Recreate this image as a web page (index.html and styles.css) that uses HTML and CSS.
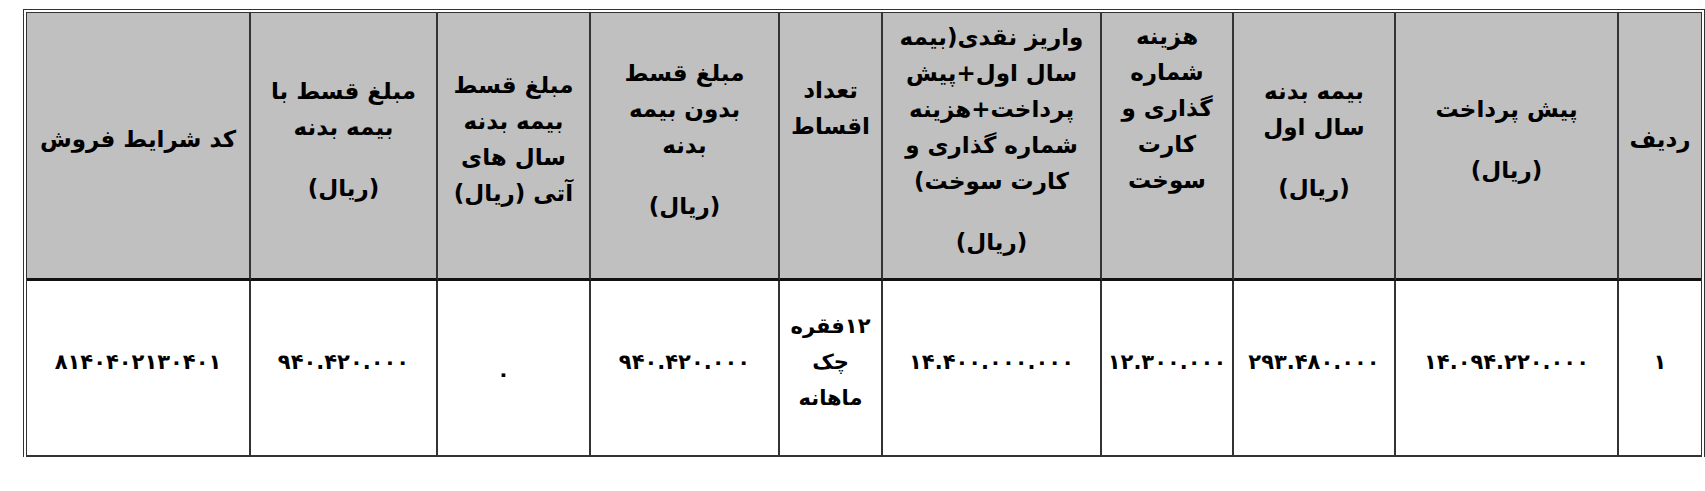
FILE: index.html
```html
<!DOCTYPE html>
<html lang="fa" dir="rtl">
<head>
<meta charset="utf-8">
<title>شرایط فروش</title>
<link rel="stylesheet" href="styles.css">
</head>
<body>
<div class="frame">
  <div class="grid">
    <div class="hd"><div class="ln">ردیف</div></div>
    <div class="hd"><div class="ln">پیش پرداخت</div><div class="ln unit">(ریال)</div></div>
    <div class="hd"><div class="ln">بیمه بدنه<br>سال اول</div><div class="ln unit">(ریال)</div></div>
    <div class="hd hd-high"><div class="ln">هزینه<br>شماره<br>گذاری و<br>کارت<br>سوخت</div></div>
    <div class="hd"><div class="ln">واریز نقدی(بیمه<br>سال اول+پیش<br>پرداخت+هزینه<br>شماره گذاری و<br>کارت سوخت)</div><div class="ln unit">(ریال)</div></div>
    <div class="hd hd-high"><div class="ln">تعداد<br>اقساط</div></div>
    <div class="hd"><div class="ln">مبلغ قسط<br>بدون بیمه<br>بدنه</div><div class="ln unit">(ریال)</div></div>
    <div class="hd"><div class="ln">مبلغ قسط<br>بیمه بدنه<br>سال های<br>آتی (ریال)</div></div>
    <div class="hd"><div class="ln">مبلغ قسط با<br>بیمه بدنه</div><div class="ln unit">(ریال)</div></div>
    <div class="hd"><div class="ln">کد شرایط فروش</div></div>

    <div class="bd">۱</div>
    <div class="bd">۱۴.۰۹۴.۲۲۰.۰۰۰</div>
    <div class="bd">۲۹۳.۴۸۰.۰۰۰</div>
    <div class="bd">۱۲.۳۰۰.۰۰۰</div>
    <div class="bd">۱۴.۴۰۰.۰۰۰.۰۰۰</div>
    <div class="bd">۱۲فقره<br>چک<br>ماهانه</div>
    <div class="bd">۹۴۰.۴۲۰.۰۰۰</div>
    <div class="bd bd-zero">۰</div>
    <div class="bd">۹۴۰.۴۲۰.۰۰۰</div>
    <div class="bd">۸۱۴۰۴۰۲۱۳۰۴۰۱</div>
  </div>
</div>
</body>
</html>
```

FILE: styles.css
```css
html, body {
  margin: 0;
  padding: 0;
  background: #ffffff;
}

body {
  font-family: "DejaVu Sans", "Noto Sans", sans-serif;
  font-weight: bold;
  color: #000;
}

.frame {
  margin: 9px 0 0 12px;
  width: 1682px;
  box-sizing: border-box;
  border: 1px solid #333;
  border-bottom: none;
  padding: 2px 2px 0 2px;
}

.grid {
  direction: rtl;
  display: grid;
  grid-template-columns: 82px 223px 162px 132px 219px 103px 189px 153px 187px 224px;
  grid-template-rows: 268px 174px;
  border: 1px solid #333;
  border-bottom: 2px solid #333;
}

.hd, .bd {
  box-sizing: border-box;
  display: flex;
  flex-direction: column;
  justify-content: center;
  align-items: center;
  text-align: center;
}

.hd + .hd, .bd + .bd {
  border-right: 2px solid #333;
}

.hd {
  background: #c0c0c0;
  border-bottom: 3px solid #111;
  font-size: 23px;
  line-height: 36px;
  padding-bottom: 13px;
}

.hd-high {
  padding-bottom: 75px;
}

.unit {
  margin-top: 25px;
}

.bd {
  font-size: 21px;
  line-height: 36px;
  padding-bottom: 13px;
}

.bd-zero {
  padding-top: 24px;
  padding-right: 20px;
}
```
